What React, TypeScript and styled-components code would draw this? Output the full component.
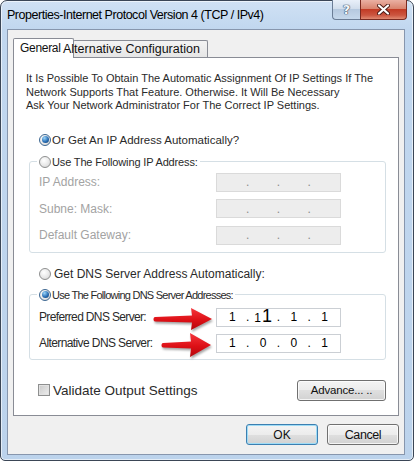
import React from 'react'
import styled, { createGlobalStyle } from 'styled-components'

const GlobalStyle = createGlobalStyle`
    html,
    body {
        margin: 0;
        padding: 0;
        background: #ffffff;
    }
    body {
        font-family: 'Liberation Sans', Arial, sans-serif;
    }
`

const Window = styled.div`
    box-sizing: border-box;
    width: 414px;
    height: 461px;
    display: flex;
    flex-direction: column;
    padding: 0 8px 5px 6px;
    border: 1px solid #3b4656;
    border-radius: 7px 7px 5px 5px;
    background: linear-gradient(#d0e1f4, #c1d7ef 28px, #bcd3ec);
    box-shadow: inset 0 0 0 1px rgba(255, 255, 255, 0.6);
`

const TitleBar = styled.div`
    height: 28px;
    display: flex;
    align-items: center;
    flex-shrink: 0;
`

const TitleText = styled.div`
    flex: 1;
    font-size: 12.5px;
    letter-spacing: -0.47px;
    color: #000;
    white-space: nowrap;
`

const Caption = styled.div`
    align-self: flex-start;
    display: flex;
    margin: -1px -2px 0 0;
`

const HelpButton = styled.div`
    box-sizing: border-box;
    width: 28px;
    height: 20px;
    display: flex;
    align-items: center;
    justify-content: center;
    border: 1px solid #6b7d96;
    border-top: none;
    border-right: none;
    border-radius: 0 0 0 4px;
    background: linear-gradient(#e9f0f9, #d2deec 45%, #b6c9df 50%, #c6d8ec);
    color: #f4f7fb;
    font-family: 'DejaVu Sans', sans-serif;
    font-weight: bold;
    font-size: 13px;
    text-shadow: 0 0 1px #34465f, 0 0 1px #34465f, 0 0 1px #34465f;
`

const CloseButton = styled.div`
    box-sizing: border-box;
    width: 47px;
    height: 20px;
    display: flex;
    align-items: center;
    justify-content: center;
    border: 1px solid #7a2a20;
    border-top: none;
    border-radius: 0 0 4px 0;
    background: linear-gradient(#eab0a3, #d9846f 45%, #c23b25 50%, #cc5640 80%, #e08a72);
`

const Client = styled.div`
    flex: 1;
    min-height: 0;
    display: flex;
    flex-direction: column;
    padding: 8px 5px 9px 5px;
    border: 1px solid #8796ad;
    background: #f0f0f0;
`

const Tabs = styled.div`
    height: 20px;
    display: flex;
    margin-bottom: -1px;
    position: relative;
    z-index: 1;
`

const Tab = styled.div<{ $active?: boolean }>`
    box-sizing: border-box;
    display: flex;
    align-items: center;
    white-space: nowrap;
    color: #111;
    border: 1px solid #898c95;
    border-bottom: none;
    border-radius: 2px 2px 0 0;
    ${p =>
        p.$active
            ? `
        width: 61px;
        height: 20px;
        padding: 0 0 2px 6px;
        font-size: 12px;
        background: #ffffff;
        letter-spacing: -0.3px;
        position: relative;
        z-index: 1;
    `
            : `
        width: 135px;
        height: 17px;
        margin: 2px 0 0 -1px;
        font-size: 12.5px;
        background: linear-gradient(#f3f3f3, #e6e6e6);
    `}
`

const TabLabel = styled.span<{ $shift?: number }>`
    position: relative;
    z-index: 2;
    margin-left: ${p => p.$shift || 0}px;
`

const Panel = styled.div`
    flex: 1;
    min-height: 0;
    display: flex;
    flex-direction: column;
    border: 1px solid #898c95;
    background: #ffffff;
`

const Intro = styled.p`
    margin: 14px 0 0 12px;
    font-size: 11px;
    line-height: 13.5px;
    color: #2a2a2a;
    white-space: nowrap;
`

const Choice = styled.label<{ $mt?: number; $size?: number; $ls?: number; $gap?: number }>`
    display: flex;
    align-items: center;
    height: 16px;
    gap: ${p => p.$gap ?? 1}px;
    margin: ${p => p.$mt ?? 0}px 0 0 ${p => (p.$mt === undefined ? 0 : 25)}px;
    font-size: ${p => p.$size ?? 12}px;
    letter-spacing: ${p => p.$ls ?? 0}px;
    color: #2a2a2a;
    white-space: nowrap;
`

const Radio = styled.span<{ $checked?: boolean }>`
    box-sizing: border-box;
    width: 12px;
    height: 12px;
    flex-shrink: 0;
    display: inline-flex;
    align-items: center;
    justify-content: center;
    border-radius: 50%;
    border: 1px solid ${p => (p.$checked ? '#3d6791' : '#8e8f8f')};
    background: radial-gradient(circle at 40% 35%, #ffffff, #e6e6e6 60%, #c8c8c8);

    &::after {
        content: '';
        display: ${p => (p.$checked ? 'block' : 'none')};
        width: 7px;
        height: 7px;
        border-radius: 50%;
        background: radial-gradient(circle at 35% 30%, #9ad6fa, #2b6fb5 55%, #0c3769);
    }
`

const Group = styled.fieldset<{ $mt: number; $pt: number; $pb: number; $gap: number }>`
    margin: ${p => p.$mt}px 12px 0 15px;
    padding: ${p => p.$pt}px 0 ${p => p.$pb}px 9px;
    min-width: 0;
    display: flex;
    flex-direction: column;
    gap: ${p => p.$gap}px;
    border: 1px solid #d5dfe5;
    border-radius: 3px;
`

const Legend = styled.legend`
    padding: 0 2px;
    margin-left: -2px;
`

const Row = styled.div`
    position: relative;
    height: 19px;
    display: flex;
    align-items: center;
`

const FieldLabel = styled.span<{ $disabled?: boolean; $ls?: number }>`
    width: 177px;
    flex-shrink: 0;
    font-size: 12px;
    letter-spacing: ${p => p.$ls ?? 0}px;
    color: ${p => (p.$disabled ? '#a3a3a3' : '#2a2a2a')};
    white-space: nowrap;
`

const Field = styled.div<{ $disabled?: boolean }>`
    box-sizing: border-box;
    width: 125px;
    height: 19px;
    display: flex;
    align-items: center;
    padding: 0 2px;
    border: 1px solid ${p => (p.$disabled ? '#dadada' : '#cbcfd4')};
    background: ${p => (p.$disabled ? '#ededed' : '#ffffff')};
    font-size: 12px;
    color: ${p => (p.$disabled ? '#8c8c8c' : '#000000')};
`

const Octet = styled.span`
    flex: 1;
    text-align: center;
    white-space: nowrap;
`

const Dot = styled.span`
    width: 4px;
    text-align: center;
`

const BigOne = styled.span`
    font-size: 18px;
    line-height: 12px;
    margin-left: 1px;
`

const ArrowBox = styled.svg<{ $left: number; $top: number }>`
    position: absolute;
    left: ${p => p.$left}px;
    top: ${p => p.$top}px;
    overflow: visible;
    filter: drop-shadow(1px 2px 1px rgba(0, 0, 0, 0.35));
`

const Footer = styled.div`
    display: flex;
    align-items: center;
    justify-content: space-between;
    margin: 20px 12px 0 24px;
`

const CheckLabel = styled.label`
    display: flex;
    align-items: center;
    gap: 3px;
    font-size: 13.5px;
    color: #2a2a2a;
    white-space: nowrap;
`

const Checkbox = styled.span`
    box-sizing: border-box;
    width: 12px;
    height: 12px;
    border: 1px solid #8e8f8f;
    background: linear-gradient(135deg, #c9c9c9, #eeeeee);
    box-shadow: inset 0 0 0 1px #e2e2e2;
`

const Button = styled.button<{ $w: number; $default?: boolean; $size?: number; $ls?: number }>`
    box-sizing: border-box;
    width: ${p => p.$w}px;
    height: 21px;
    padding: 0;
    border: 1px solid ${p => (p.$default ? '#3c7fb1' : '#707070')};
    border-radius: 3px;
    background: linear-gradient(#f4f4f4, #ececec 50%, #dfdfdf 50%, #d2d2d2);
    box-shadow: inset 0 0 0 1px ${p => (p.$default ? '#9fdcf6' : 'rgba(255, 255, 255, 0.75)')};
    font-family: 'Liberation Sans', Arial, sans-serif;
    font-size: ${p => p.$size ?? 12}px;
    letter-spacing: ${p => p.$ls ?? 0}px;
    color: #111;
`

const Actions = styled.div`
    display: flex;
    justify-content: flex-end;
    gap: 9px;
    margin-top: 8px;
`

function Arrow({ length, height, left, top }: { length: number; height: number; left: number; top: number }) {
    const c = height / 2
    const L = length
    const d = `M3 ${c - 2} L${L - 21} ${c - 3.5} L${L - 22} 1 L${L - 1} ${c} L${L - 22} ${height - 1} L${L - 21} ${c + 3.5} L3 ${c + 2.5} C1 ${c + 2.2} 1 ${c - 1.7} 3 ${c - 2} Z`
    return (
        <ArrowBox $left={left} $top={top} width={length} height={height} viewBox={`0 0 ${length} ${height}`}>
            <defs>
                <linearGradient id={`red${length}`} x1="0" y1="0" x2="0" y2="1">
                    <stop offset="0" stopColor="#f5363c" />
                    <stop offset="0.55" stopColor="#dd1016" />
                    <stop offset="1" stopColor="#b4070c" />
                </linearGradient>
            </defs>
            <path d={d} fill={`url(#red${length})`} />
        </ArrowBox>
    )
}

function IpField({ octets, disabled }: { octets: React.ReactNode[]; disabled?: boolean }) {
    return (
        <Field $disabled={disabled}>
            {octets.map((o, i) => (
                <React.Fragment key={i}>
                    {i > 0 && <Dot>.</Dot>}
                    <Octet>{o}</Octet>
                </React.Fragment>
            ))}
        </Field>
    )
}

const empty = ['', '', '', '']

export default function App() {
    return (
        <>
            <GlobalStyle />
            <Window>
                <TitleBar>
                    <TitleText>Properties-Internet Protocol Version 4 (TCP / IPv4)</TitleText>
                    <Caption>
                        <HelpButton>?</HelpButton>
                        <CloseButton>
                            <svg width="13" height="11" viewBox="0 0 13 11">
                                <path d="M2 1.5 L11 9.5 M11 1.5 L2 9.5" stroke="#4a1a14" strokeWidth="4" strokeLinecap="round" />
                                <path d="M2 1.5 L11 9.5 M11 1.5 L2 9.5" stroke="#ffffff" strokeWidth="2.2" strokeLinecap="round" />
                            </svg>
                        </CloseButton>
                    </Caption>
                </TitleBar>
                <Client>
                    <Tabs>
                        <Tab $active>General</Tab>
                        <Tab>
                            <TabLabel $shift={-11}>Alternative Configuration</TabLabel>
                        </Tab>
                    </Tabs>
                    <Panel>
                        <Intro>
                            It Is Possible To Obtain The Automatic Assignment Of IP Settings If The
                            <br />
                            Network Supports That Feature. Otherwise. It Will Be Necessary
                            <br />
                            Ask Your Network Administrator For The Correct IP Settings.
                        </Intro>

                        <Choice $mt={19} $size={11.5}>
                            <Radio $checked />
                            Or Get An IP Address Automatically?
                        </Choice>

                        <Group $mt={6} $pt={3} $pb={7} $gap={7.5}>
                            <Legend>
                                <Choice $size={11} $ls={-0.15}>
                                    <Radio />
                                    Use The Following IP Address:
                                </Choice>
                            </Legend>
                            <Row>
                                <FieldLabel $disabled>IP Address:</FieldLabel>
                                <IpField octets={empty} disabled />
                            </Row>
                            <Row>
                                <FieldLabel $disabled>Subne: Mask:</FieldLabel>
                                <IpField octets={empty} disabled />
                            </Row>
                            <Row>
                                <FieldLabel $disabled>Default Gateway:</FieldLabel>
                                <IpField octets={empty} disabled />
                            </Row>
                        </Group>

                        <Choice $mt={13} $size={12} $gap={3}>
                            <Radio />
                            Get DNS Server Address Automatically:
                        </Choice>

                        <Group $mt={5} $pt={5} $pb={6} $gap={7}>
                            <Legend>
                                <Choice $size={11} $ls={-0.75}>
                                    <Radio $checked />
                                    Use The Following DNS Server Addresses:
                                </Choice>
                            </Legend>
                            <Row>
                                <FieldLabel $ls={-0.65}>Preferred DNS Server:</FieldLabel>
                                <IpField octets={['1', <>1<BigOne>1</BigOne></>, '1', '1']} />
                                <Arrow length={61} height={24} left={113} top={-1} />
                            </Row>
                            <Row>
                                <FieldLabel $ls={-0.6}>Alternative DNS Server:</FieldLabel>
                                <IpField octets={['1', '0', '0', '1']} />
                                <Arrow length={52} height={26} left={121} top={-2} />
                            </Row>
                        </Group>

                        <Footer>
                            <CheckLabel>
                                <Checkbox />
                                Validate Output Settings
                            </CheckLabel>
                            <Button $w={89} $size={11.5} $ls={-0.2}>
                                Advance... ..
                            </Button>
                        </Footer>
                    </Panel>
                    <Actions>
                        <Button $w={72} $default>
                            OK
                        </Button>
                        <Button $w={72} $size={12.5} $ls={-0.4}>
                            Cancel
                        </Button>
                    </Actions>
                </Client>
            </Window>
        </>
    )
}
